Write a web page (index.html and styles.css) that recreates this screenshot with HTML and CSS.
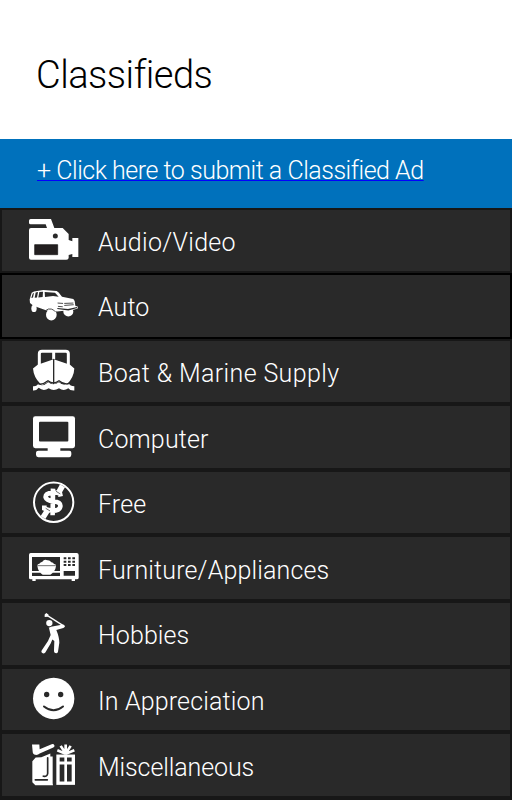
FILE: index.html
```html
<!DOCTYPE html>
<html lang="en">
<head>
<meta charset="UTF-8">
<meta name="viewport" content="width=device-width, initial-scale=1.0">
<title>Classifieds</title>
<link rel="stylesheet" href="styles.css">
</head>
<body>
  <header>
    <h1>Classifieds</h1>
  </header>

  <div class="submit-bar">
    <a href="#">+ Click here to submit a Classified Ad</a>
  </div>

  <ul class="categories">
    <li>
      <svg class="icon" viewBox="84 33 156 144">
        <path d="M92 42h61l10 27h25l18 18v18l11 4V99h18v57h-18v-9l-11 3v8q0 6-7 6H93q-6 0-6-6V75q0-6 6-6h48l-4-11H92q-5 0-5-5v-6q0-5 5-5z"/>
        <path class="cut line" d="M104 119h69v30h-69z"/>
        <circle class="cut" cx="166" cy="93" r="7.5"/>
      </svg>
      <span class="audio">Audio/Video</span>
    </li>
    <li class="active">
      <svg class="icon" viewBox="84 34.8 156 144">
        <path d="M89 87l6-20 7-4 28-4 40 3 6 4 10 13 34 7 4 6 2 14 8 3-1 5-12 4-50 5-31-3-40-14-10-8z"/>
        <ellipse cx="102" cy="114" rx="8" ry="11"/>
        <ellipse cx="154" cy="133" rx="16" ry="17"/>
        <ellipse cx="205" cy="124" rx="15" ry="14"/>
        <path class="cut" d="M98 70l4-3-3 14-5 2zM107 66l7-1-3 16-7 1zM118 65l11-1-1 16-13 1zM134 65l31 2 11 12-17-2-24 3z"/>
        <path class="cutline" d="M174 98l14 1M194 99l25-1M194 105l26-2M175 108l12 1M139 119q5-5 15-3 8 2 11 7" stroke-width="2.5"/>
        <path class="cut" d="M172 113l32 3 27-6 1 3-27 7-33-4z"/>
      </svg>
      <span class="auto">Auto</span>
    </li>
    <li>
      <svg class="icon" viewBox="84 33.6 156 144">
        <path class="stroke" d="M118 88V54q0-8 8-8h71q8 0 8 8v34M161 46v24" stroke-width="9"/>
        <path d="M161 70l49 17 13 11q-1 26-22 47-6 4-9-1l-15-6-16 7-16-7-14 7q-5 4-10-1-20-20-22-46l14-11z"/>
        <path class="cutline" d="M161 71v73" stroke-width="4"/>
        <path d="M99 151q13 1 15-8 12 12 31-4 14 12 32 0 15 14 30 4 3 8 16 8v13q-13 1-18-7-14 11-28 0-16 11-31 0-15 11-30-1-6 9-17 8z"/>
        <path class="cutline" d="M111 143q16 6 33-8 16 13 33 0 17 14 32 7" stroke-width="4"/>
      </svg>
      <span class="boat">Boat &amp; Marine Supply</span>
    </li>
    <li>
      <svg class="icon" viewBox="84 32.4 156 144">
        <rect x="99" y="42" width="126" height="96" rx="7"/>
        <rect class="cut" x="117" y="59" width="88" height="59" rx="3"/>
        <path d="M143 136h38v10h27q6 0 6 6v6q0 7-6 7h-93q-7 0-7-7v-6q0-6 7-6h28z"/>
      </svg>
      <span class="computer">Computer</span>
    </li>
    <li>
      <svg class="icon" viewBox="84 31.2 156 144">
        <circle class="stroke" cx="161" cy="101" r="59" stroke-width="6"/>
        <path class="stroke" d="M159 60l-1 80M182 84l-2-9q-10-4-22-3-22 2-21 14 3 10 23 12 23 2 21 16-3 14-26 12-14-1-22-6v-9" stroke-width="14"/>
        <path class="cutline edge" d="M192 81v8h-13M189 100q5 11 1 20-5 13-24 15v8" stroke-width="2"/>
        <path d="M180 47l15 9-12 20-14-9zM137 119l14 8-15 24-14-9z"/>
        <path class="cutline edge" d="M168 68l13 8M137 119l13 8" stroke-width="2"/>
      </svg>
      <span class="free">Free</span>
    </li>
    <li>
      <svg class="icon" viewBox="84 30 156 144">
        <path d="M92 57h138q6 0 6 6v68q0 5-6 5h-5v5h-10v-5H107v5H97v-5h-5q-5 0-5-5V63q0-6 5-6z"/>
        <path class="cut" d="M96 69h84v57H96zM191 111h34v14h-34z"/>
        <path d="M95 111h86v5H95zM112 95q0-6 6-6 3-5 9-6 6-9 15-4 7-1 12 6 6 0 8 5 7 0 6 6-2 17-17 26h-23q-14-9-16-27z"/>
        <path class="cutline" d="M114 95h52" stroke-width="2"/>
        <path class="cut" d="M191 70h8v6h-8zM204 70h8v6h-8zM217 70h8v6h-8zM191 80h8v6h-8zM204 80h8v6h-8zM217 80h8v6h-8zM191 90h8v6h-8zM204 90h8v6h-8zM217 90h8v6h-8z"/>
      </svg>
      <span class="furniture">Furniture/Appliances</span>
    </li>
    <li>
      <svg class="icon" viewBox="84 28.8 156 144">
        <circle cx="148" cy="68" r="9.5"/>
        <path class="stroke" d="M140 44l52 33" stroke-width="4"/>
        <path d="M134 42l5-4 7 5-3 6-9 1zM145 83l8-4 32-6 7 0 3 6-5 4-21 6q9 22 9 38l-4 27q-2 6-8 4-5-2-4-8l1-28-6-5-5 12-16 27q-5 5-9 2-5-3-2-8l19-28 8-18-5-21z"/>
      </svg>
      <span class="hobbies">Hobbies</span>
    </li>
    <li>
      <svg class="icon" viewBox="84 30.6 156 144">
        <circle cx="161" cy="101" r="62"/>
        <circle class="cut" cx="140" cy="89" r="8"/>
        <circle class="cut" cx="182" cy="89" r="8"/>
        <path class="cutline" d="M132 125q29 23 57 0" stroke-width="6"/>
      </svg>
      <span class="appreciation">In Appreciation</span>
    </li>
    <li>
      <svg class="icon" viewBox="84 32.4 156 144">
        <path d="M96 43h22l1 14 36-15q6-2 8 3 2 5-3 7l-41 18q-5 5-13 4-8-1-8-10zM97 93l10-11 17-1 27-11v9h7v80l1 6h-53l-9-9z"/>
        <path class="cutline" d="M143 83v47q-1 10-13 8M106 149h36" stroke-width="5"/>
        <path d="M169 73h56v91h-56z"/>
        <path class="stroke" d="M197 74V43M197 70l-15-23M197 70l15-23M197 71l-25-11M197 71l26-11" stroke-width="8"/>
        <path class="cut" d="M179 82h14v12h-14zM201 82h14v12h-14zM179 103h14v51h-14zM201 103h14v51h-14z"/>
      </svg>
      <span class="misc">Miscellaneous</span>
    </li>
  </ul>
</body>
</html>
```
FILE: styles.css
```css
body {
  margin: 0;
  font-family: Roboto, "Liberation Sans", sans-serif;
  font-weight: 300;
  background-color: #fff;
  color: #000;
  overflow: hidden;
}
header {
  height: 138.5px;
  padding: 52px 36px 0;
  box-sizing: border-box;
}
h1 {
  margin: 0;
  font-size: 38px;
  line-height: 46px;
  font-weight: 300;
  letter-spacing: -0.5px;
}
.submit-bar {
  height: 69px;
  padding: 17px 37px 0;
  box-sizing: border-box;
  background-color: #0071bc;
  font-size: 25px;
  line-height: 30px;
  letter-spacing: -0.48px;
}
.submit-bar a {
  color: #fff;
  text-decoration: underline;
  text-decoration-color: #0000ff;
  text-decoration-thickness: 1px;
}
.categories {
  margin: 0;
  padding: 0 0 3px;
  list-style: none;
  background-color: #171717;
}
.categories li {
  display: flex;
  align-items: center;
  gap: 18px;
  height: 65.6px;
  padding-left: 26px;
  box-sizing: border-box;
  border: 2px solid #171717;
  background-color: #292929;
  color: #fff;
  font-size: 25px;
  line-height: 30px;
  letter-spacing: 0.3px;
}
.categories li.active {
  border-color: #000;
}
.categories span {
  padding-top: 5px;
}
.boat {
  letter-spacing: 0.37px;
}
.auto,
.free {
  letter-spacing: 0.1px;
}
.computer,
.furniture,
.appreciation {
  letter-spacing: 0.15px;
}
.hobbies {
  letter-spacing: 0.1px;
}
.misc {
  letter-spacing: -0.1px;
}
.icon {
  width: 52px;
  height: 48px;
  fill: #fff;
}
.icon .cut {
  fill: #292929;
}
.icon .line {
  fill: #231f20;
  stroke: #111;
  stroke-width: 2;
}
.icon .stroke {
  fill: none;
  stroke: #fff;
}
.icon .cutline {
  fill: none;
  stroke: #292929;
  stroke-linecap: round;
}
.icon .edge {
  stroke-linecap: butt;
}
```
